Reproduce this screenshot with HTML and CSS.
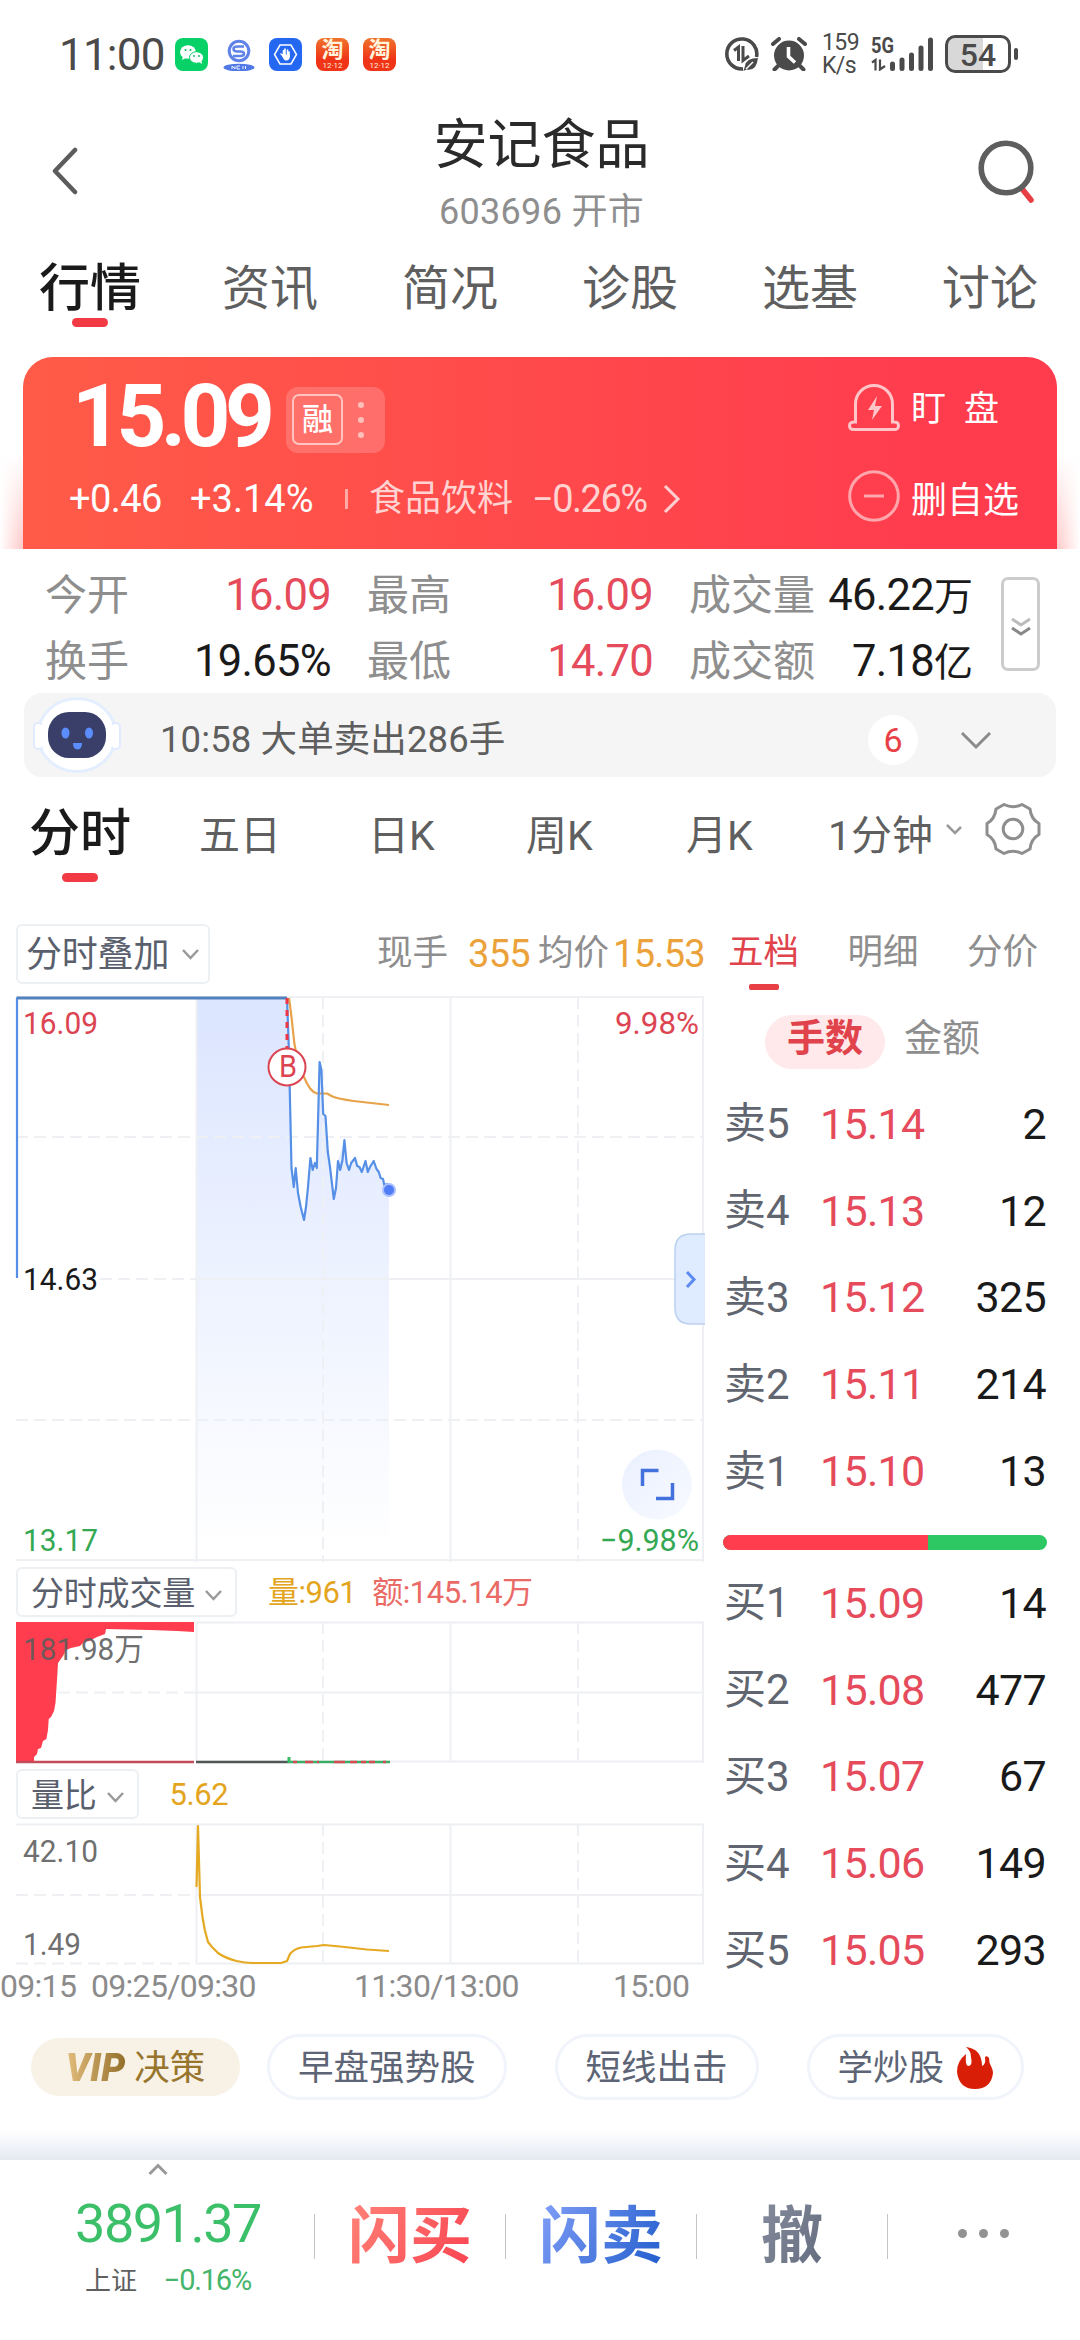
FILE: index.html
```html
<!DOCTYPE html>
<html lang="zh-CN">
<head>
    <meta charset="UTF-8">
    <meta name="viewport" content="width=device-width, initial-scale=1.0">
    <title>安记食品 603696</title>
    <link rel="stylesheet" href="styles.css">
</head>
<body>
    <div id="app">
        <div class="status-bar">
            <div class="status-left">
                <span class="clock">11:00</span>
                <svg class="app-icon" viewBox="0 0 33 33">
                    <rect width="33" height="33" rx="8" fill="#08d167"/>
                    <ellipse cx="13" cy="14" rx="8" ry="6.8" fill="#fff"/>
                    <path d="M8 18l-1 4 4-2z" fill="#fff"/>
                    <ellipse cx="21.5" cy="19.5" rx="7" ry="5.8" fill="#fff" stroke="#08d167"/>
                    <path d="M24 24l3 2-.6-3.500z" fill="#fff"/>
                    <g fill="#08b85c"><circle cx="10.500" cy="12" r="1"/><circle cx="15.500" cy="12" r="1"/><circle cx="19" cy="18" r=".9"/><circle cx="24" cy="18" r=".9"/></g>
                </svg>
                <svg class="app-icon" viewBox="0 0 33 33">
                    <circle cx="17" cy="13" r="9.800" fill="none" stroke="#5f83e8" stroke-width="3"/>
                    <path d="M22 8.500h-6.500q-4 0-4 2.500t4 2.500h3q3.500 0 3.500 2.300t-4 2.300h-7" fill="none" stroke="#5f83e8" stroke-width="2.500"/>
                    <ellipse cx="17" cy="29.500" rx="15.500" ry="3.800" fill="#5079e6"/>
                    <path d="M10 31v-3l3 3v-3M18 28h-3v3h3M21 28v3M23.500 28v3" fill="none" stroke="#fff" stroke-width=".9"/>
                </svg>
                <svg class="app-icon" viewBox="0 0 33 33">
                    <rect width="33" height="33" rx="8" fill="#2468f2"/>
                    <path d="M11 7h11l5.500 9.500L22 26H11L5.500 16.500z" fill="none" stroke="#fff" stroke-width="1.500"/>
                    <path d="M12 16l2.500 2v-5.500M16 17.500v-6.500M18.500 17.500v-5.500M20 18.500v-4.500" fill="none" stroke="#fff" stroke-width="1.600" stroke-linecap="round"/>
                    <path d="M12.500 16.500h8.300v2q0 4-3.800 4-2.500 0-4.500-6z" fill="#fff"/>
                </svg>
                <span class="app-icon taobao"><b>淘</b><i>12·12</i></span>
                <span class="app-icon taobao"><b>淘</b><i>12·12</i></span>
            </div>
            <div class="status-right">
                <svg class="ic-data" viewBox="0 0 34 34">
                    <path d="M31.500 20A15 15 0 1 0 18 31.900" fill="none" stroke="#4a4a4a" stroke-width="3.600"/>
                    <path d="M9 13.500l4.500-3.500v14M18 9v14.500l6-4.500" fill="none" stroke="#4a4a4a" stroke-width="3"/>
                    <path d="M33 21q-12 0-13 8l-1.500 5 3-1.500q10 2 11.500-11.500z" fill="#4a4a4a"/>
                    <path d="M21 32l7-7" stroke="#fff" stroke-width="1.500"/>
                </svg>
                <svg class="ic-alarm" viewBox="0 0 36 34">
                    <circle cx="18" cy="18.500" r="15" fill="#4a4a4a"/>
                    <path d="M2 7l6-5M34 7l-6-5M7 29l-3.500 3.500M29 29l3.500 3.500" stroke="#4a4a4a" stroke-width="4" stroke-linecap="round"/>
                    <path d="M17.500 10v9.500l6.500 6" fill="none" stroke="#fff" stroke-width="3.600"/>
                </svg>
                <div class="net-speed"><span>159</span><span>K/s</span></div>
                <svg class="ic-signal" viewBox="0 -3 63 37">
                    <text x="0" y="16" textLength="23" lengthAdjust="spacingAndGlyphs">5G</text>
                    <path d="M1 25.500l3.500-2.500v10.500M9 22.500v10l5-3.500" fill="none" stroke="#4a4a4a" stroke-width="2.200"/>
                    <path d="M21.500 27v4.500M31 23v8.500M40.500 18v13.500M50 11v20.500M59.500 3v28.500" stroke="#4a4a4a" stroke-width="5" stroke-linecap="round"/>
                </svg>
                <div class="battery"><span>54</span></div>
            </div>
        </div>

        <div class="header">
            <svg class="back" viewBox="0 0 26 48"><path d="M23 3L3 24l20 21" fill="none" stroke="#5c5c5c" stroke-width="4.500" stroke-linecap="round" stroke-linejoin="round"/></svg>
            <div class="header-title">
                <h1>安记食品</h1>
                <p>603696 开市</p>
            </div>
            <svg class="search" viewBox="0 0 58 64">
                <path d="M45 50l8 10" stroke="#e83f45" stroke-width="5.500" stroke-linecap="round"/>
                <circle cx="28" cy="28" r="24.800" fill="none" stroke="#5e5e5e" stroke-width="5.600"/>
            </svg>
        </div>

        <div class="main-tabs">
            <div class="main-tab active">行情</div>
            <div class="main-tab">资讯</div>
            <div class="main-tab">简况</div>
            <div class="main-tab">诊股</div>
            <div class="main-tab">选基</div>
            <div class="main-tab">讨论</div>
        </div>

        <div class="price-wrap">
            <div class="price-card">
                <div class="price-info">
                    <div class="price-row">
                        <span class="price">15.09</span>
                        <span class="tag-box"><span class="tag">融</span><span class="dots"><i></i><i></i><i></i></span></span>
                    </div>
                    <div class="change-row">
                        <span class="chg">+0.46</span>
                        <span class="pct">+3.14%</span>
                        <span class="bar-sep"></span>
                        <span class="sector">食品饮料</span>
                        <span class="sector-pct">−0.26%</span>
                        <svg width="18" height="30" viewBox="0 0 18 30"><path d="M2 2l13 13L2 28" fill="none" stroke="#ffd0d2" stroke-width="3"/></svg>
                    </div>
                </div>
                <div class="price-actions">
                    <div class="action watch">
                        <svg width="52" height="48" viewBox="0 0 52 48" fill="none" stroke="#ffc5c9" stroke-width="3">
                            <path d="M7.500 38V20a18.500 18.500 0 0 1 37 0v18h1.500q4.500 0 4.500 3.800t-4.500 3.700H6q-4.500 0-4.500-3.700T6 38z"/>
                            <path d="M29 12l-9 14h6l-2 10 10-14h-7z" fill="#ffc5c9" stroke="none"/>
                        </svg>
                        <span>盯</span><span>盘</span>
                    </div>
                    <div class="action remove">
                        <svg width="52" height="52" viewBox="0 0 52 52" fill="none" stroke="#ffa5ac" stroke-width="3"><circle cx="26" cy="26" r="24.300"/><path d="M16 26h20"/></svg>
                        <span>删自选</span>
                    </div>
                </div>
            </div>
        </div>

        <div class="stats">
            <div class="stats-grid">
                <div class="stat"><label>今开</label><span class="up">16.09</span></div>
                <div class="stat"><label>最高</label><span class="up">16.09</span></div>
                <div class="stat"><label>成交量</label><span>46.22<em>万</em></span></div>
                <div class="stat"><label>换手</label><span>19.65%</span></div>
                <div class="stat"><label>最低</label><span class="up">14.70</span></div>
                <div class="stat"><label>成交额</label><span>7.18<em>亿</em></span></div>
            </div>
            <div class="stats-more">
                <svg width="20" height="22" viewBox="0 0 20 22" fill="none" stroke-width="3"><path d="M1 3l9 6 9-6" stroke="#bbb"/><path d="M1 12l9 6 9-6" stroke="#888"/></svg>
            </div>
        </div>

        <div class="notice">
            <svg class="robot" width="90" height="76" viewBox="0 0 90 76">
                <ellipse cx="45" cy="38" rx="39" ry="36.500" fill="#fff" stroke="#e4eeff" stroke-width="3"/>
                <rect x="2" y="26" width="9" height="26" rx="4" fill="#fff" stroke="#e0ebff" stroke-width="2"/>
                <rect x="79" y="26" width="9" height="26" rx="4" fill="#fff" stroke="#e0ebff" stroke-width="2"/>
                <ellipse cx="45" cy="38" rx="37" ry="34" fill="#fff"/>
                <rect x="16" y="15" width="58" height="46" rx="21" fill="#393f68"/>
                <ellipse cx="33.500" cy="36" rx="4" ry="5.500" fill="#5c8dff"/>
                <ellipse cx="57" cy="36" rx="4" ry="5.500" fill="#5c8dff"/>
                <path d="M41 46h9q0 6-4.500 6.500Q41 52 41 46z" fill="#5c8dff"/>
            </svg>
            <span class="notice-text">10:58 大单卖出286手</span>
            <span class="notice-count">6</span>
            <svg width="32" height="20" viewBox="0 0 32 20"><path d="M2 2l14 14L30 2" fill="none" stroke="#8b8b8b" stroke-width="3"/></svg>
        </div>

        <div class="period-tabs">
            <span class="period active">分时</span>
            <span class="period">五日</span>
            <span class="period">日K</span>
            <span class="period">周K</span>
            <span class="period">月K</span>
            <span class="period minute">1分钟<svg width="16" height="12" viewBox="0 0 16 12"><path d="M1 1l8 8 6-6" fill="none" stroke="#999" stroke-width="2.500"/></svg></span>
            <svg class="gear" width="56" height="54" viewBox="0 0 56 54" fill="none" stroke="#8e8e8e" stroke-width="3">
                <path d="M19 2.500Q28 7 37 2.500L45 7Q46 17 54 21.500V32.500Q46 37 45 47L37 51.500Q28 47 19 51.500L11 47Q10 37 2 32.500V21.500Q10 17 11 7Z" stroke-linejoin="round"/>
                <circle cx="28" cy="27" r="9.800"/>
            </svg>
        </div>

        <div class="market">
            <div class="charts">
                <div class="chart-bar">
                    <div class="select overlay">分时叠加<svg width="17" height="12" viewBox="0 0 17 12"><path d="M1 1l7.500 8L16 1" fill="none" stroke="#999" stroke-width="2.500"/></svg></div>
                    <div class="now">
                        <span>现手</span><b class="lots">355</b><span>均价</span><b>15.53</b>
                    </div>
                </div>

                <svg class="chart" height="575" viewBox="0 990 710 575">
                    <defs>
                        <linearGradient id="fade" x1="0" y1="0" x2="0" y2="1">
                            <stop offset="0" stop-color="#dbe5ff"/>
                            <stop offset="1" stop-color="#dbe5ff" stop-opacity="0"/>
                        </linearGradient>
                        <linearGradient id="full" x1="0" y1="0" x2="1" y2="1">
                            <stop offset="0" stop-color="#eaf0ff"/>
                            <stop offset="1" stop-color="#f8faff"/>
                        </linearGradient>
                    </defs>
                    <path d="M197 998H287L291.500 1168 293.800 1187 295.700 1168 298 1193 304 1220 308 1187 310.400 1158 312.700 1170 316.800 1168 319.600 1062 323.200 1114 325.500 1116 327.800 1152 333.800 1199 338 1161 344.400 1140 349 1170 355 1158 361.800 1172 365.500 1161 367.800 1172 373.700 1161 380.600 1178 389 1190V1550H197z" fill="url(#fade)"/>
                    <g class="grid">
                        <path d="M16 997H704M196.500 997V1562M450.500 997V1562M703 997V1562M197 1279H704M16 1560H704"/>
                        <path class="dash" d="M323 997V1562M578 997V1562M16 1137H704M100 1279H197M16 1420H704"/>
                    </g>
                    <path d="M17 1278V998H287" class="line-price"/>
                    <path d="M17 998H287" stroke="#5282bd" stroke-width="3"/>
                    <path class="line-avg" d="M289 998L291.500 1017 294.300 1043 296 1052Q299 1068 304 1077 310 1092 317 1093.500H327L331.500 1096Q338 1099 353.500 1101L389 1105"/>
                    <path class="line-price" d="M287 998L288.800 1047 289.700 1087 291.500 1168 293.800 1187 295.700 1168 298 1193 300.700 1207 304 1220 306 1207 308 1187 310.400 1158 312.700 1170 315 1163 316.800 1168 319.600 1062 321.400 1070 323.200 1114 325.500 1116 327.800 1152 330 1167 333.800 1199 336 1188 338 1161 340.200 1170 342.500 1160 344.400 1140 346.600 1163 349 1170 351.200 1163 355 1158 357.200 1166 359.500 1167 361.800 1172 365.500 1161 367.800 1172 370 1167 373.700 1161 376.500 1169 378.800 1172 380.600 1178 383 1179 384.300 1185 387 1184 389 1190"/>
                    <circle cx="389" cy="1190" r="7" fill="#a9bfff"/>
                    <circle cx="389" cy="1190" r="5" fill="#4f7bf5"/>
                    <path d="M287 998V1048" stroke="#ee3744" stroke-width="3" stroke-dasharray="6 6"/>
                    <circle cx="287" cy="1067" r="18.500" fill="#fff" stroke="#dc4452" stroke-width="2"/>
                    <text class="up" x="279" y="1077" textLength="18" lengthAdjust="spacingAndGlyphs">B</text>
                    <text class="up" x="23" y="1034" textLength="75" lengthAdjust="spacingAndGlyphs">16.09</text>
                    <text class="up" x="615" y="1034" textLength="84" lengthAdjust="spacingAndGlyphs">9.98%</text>
                    <text x="23" y="1290" textLength="75" lengthAdjust="spacingAndGlyphs">14.63</text>
                    <text class="down" x="23" y="1551" textLength="75" lengthAdjust="spacingAndGlyphs">13.17</text>
                    <text class="down" x="600" y="1551" textLength="99" lengthAdjust="spacingAndGlyphs">−9.98%</text>
                    <path d="M705 1234H691Q675 1234 675 1250V1308Q675 1324 691 1324H705" fill="#dfebff" stroke="#bcd0f0" stroke-width="1.500"/>
                    <path d="M687 1272L694 1279.500 687 1287" fill="none" stroke="#5b8af0" stroke-width="3"/>
                    <circle cx="657" cy="1484.500" r="35" fill="url(#full)"/>
                    <path d="M658.500 1470.500H642.500V1486M656 1498.500H672.500V1483" fill="none" stroke="#4472dc" stroke-width="3.500"/>
                </svg>

                <div class="sub-bar">
                    <div class="select">分时成交量<svg width="17" height="12" viewBox="0 0 17 12"><path d="M1 1l7.500 8L16 1" fill="none" stroke="#999" stroke-width="2.500"/></svg></div>
                    <span class="gold">量:961</span>
                    <span class="rose">额:145.14万</span>
                </div>

                <svg class="chart" height="147" viewBox="0 1619 710 147">
                    <g class="grid">
                        <path d="M196 1622.500H704M196.500 1622V1762M450.500 1622V1762M703 1622V1763M197 1692.500H704M197 1761.500H704"/>
                        <path class="dash" d="M323 1622V1762M578 1622V1762M58 1692.500H197"/>
                    </g>
                    <path d="M16 1622H194V1632L177 1631 150 1630 106 1629 105 1634 97 1637 89 1641 84 1642 80 1646 71 1648 66 1650 63 1656 58 1663 57 1680 55.500 1703 54 1711 51 1717 48.700 1719 48 1730 46.400 1739 43 1741 41 1748 38 1749 37 1754 34 1757V1763H16z" fill="#ff3d4e"/>
                    <path d="M16 1762H194" stroke="#c34b5a" stroke-width="2.500"/>
                    <path d="M196 1762H290" stroke="#505755" stroke-width="2.500"/>
                    <path d="M289 1757V1763" stroke="#34bd65" stroke-width="3"/>
                    <path d="M290 1762H390" stroke="#3cab66" stroke-width="2.500"/>
                    <path d="M293 1762h4M305 1762h8M317 1762h2M334 1762h11M350 1762h7M361 1762h5M369 1762h6M383 1762h3" stroke="#d64c55" stroke-width="2.500"/>
                    <text class="gray" x="23" y="1660" textLength="121" lengthAdjust="spacingAndGlyphs">181.98万</text>
                </svg>

                <div class="sub-bar ratio-bar">
                    <div class="select">量比<svg width="17" height="12" viewBox="0 0 17 12"><path d="M1 1l7.500 8L16 1" fill="none" stroke="#999" stroke-width="2.500"/></svg></div>
                    <span class="gold">5.62</span>
                </div>

                <svg class="chart" height="145" viewBox="0 1821 710 145">
                    <g class="grid">
                        <path d="M16 1824.500H704M196.500 1824V1964M450.500 1824V1964M703 1824V1964M197 1895H704M197 1963.500H704"/>
                        <path class="dash" d="M323 1824V1964M578 1824V1964M16 1895H197M16 1963.500H197"/>
                    </g>
                    <path class="line-ratio" d="M196.500 1887L198 1826 200 1897 202.500 1917 204.800 1930 208 1942 212 1947 218 1953Q225 1958 236.500 1961 245 1963 252.500 1963H281L287 1961 290 1954Q294 1949 301 1947.500L317 1946 324 1945 340 1946.500 367 1949.500 389 1951"/>
                    <text class="gray" x="23" y="1862" textLength="75" lengthAdjust="spacingAndGlyphs">42.10</text>
                    <text class="gray" x="23" y="1955" textLength="58" lengthAdjust="spacingAndGlyphs">1.49</text>
                </svg>

                <div class="axis">
                    <span>09:15</span><span>09:25/09:30</span><span>11:30/13:00</span><span>15:00</span>
                </div>
            </div>

            <div class="book">
                <div class="book-tabs">
                    <span class="active">五档</span><span>明细</span><span>分价</span>
                </div>
                <div class="book-unit"><span class="active">手数</span><span>金额</span></div>
                <div class="level"><label>卖5</label><b>15.14</b><span>2</span></div>
                <div class="level"><label>卖4</label><b>15.13</b><span>12</span></div>
                <div class="level"><label>卖3</label><b>15.12</b><span>325</span></div>
                <div class="level"><label>卖2</label><b>15.11</b><span>214</span></div>
                <div class="level"><label>卖1</label><b>15.10</b><span>13</span></div>
                <div class="power"><i style="width: 63.2%"></i></div>
                <div class="level"><label>买1</label><b>15.09</b><span>14</span></div>
                <div class="level"><label>买2</label><b>15.08</b><span>477</span></div>
                <div class="level"><label>买3</label><b>15.07</b><span>67</span></div>
                <div class="level"><label>买4</label><b>15.06</b><span>149</span></div>
                <div class="level"><label>买5</label><b>15.05</b><span>293</span></div>
            </div>
        </div>

        <div class="chips">
            <div class="chip vip"><b>VIP</b><span>决策</span></div>
            <div class="chip"><span>早盘强势股</span></div>
            <div class="chip"><span>短线出击</span></div>
            <div class="chip"><span>学炒股</span><svg width="36" height="42" viewBox="0 0 36 42"><path d="M9 0Q25 2 25 19q4-1 3-9 2-2 4 1 0 5 2 8 2 4 2 7-2 16-18 16T0 25Q0 14 9 7q-1 11 2 12 5 0 3-9Q14 4 9 0z" fill="#d81e06"/></svg></div>
        </div>

        <div class="bottom-shade"></div>
        <div class="bottom-bar">
            <div class="index">
                <svg width="20" height="13" viewBox="0 0 20 13"><path d="M1.500 11L10 2.500l8.500 8.500" fill="none" stroke="#999" stroke-width="3"/></svg>
                <div class="index-value">3891.37</div>
                <div class="index-sub"><span>上证</span><em>−0.16%</em></div>
            </div>
            <div class="trade"><b class="buy">闪买</b></div>
            <div class="trade"><b class="sell">闪卖</b></div>
            <div class="trade"><b class="cancel">撤</b></div>
            <div class="trade more"><i></i><i></i><i></i></div>
        </div>
    </div>
</body>
</html>
```
FILE: styles.css
```css
* {
    margin: 0;
    padding: 0;
    box-sizing: border-box;
}

body {
    width: 1080px;
    height: 2340px;
    font-family: Roboto, "Noto Sans CJK SC", sans-serif;
    line-height: 1;
    background: #fff;
    color: #1a1a1a;
    overflow: hidden;
}

svg {
    display: block;
    flex: none;
}

b, i, em {
    font-style: normal;
    font-weight: 400;
}

span, b, label {
    white-space: nowrap;
}

#app {
    display: flex;
    flex-direction: column;
}

/* status bar */
.status-bar {
    height: 108px;
    padding: 0 62px 0 59px;
    display: flex;
    justify-content: space-between;
    align-items: center;
    color: #4a4a4a;
}

.status-left,
.status-right {
    display: flex;
    align-items: center;
}

.status-left {
    gap: 14px;
}

.clock {
    width: 102px;
    padding-top: 2px;
    font-size: 44px;
    letter-spacing: -0.8px;
}

.app-icon {
    width: 33px;
    height: 33px;
}

.taobao {
    border-radius: 8px;
    background: linear-gradient(#f0732c, #ef3417 65%);
    color: #fff3dc;
    display: flex;
    flex-direction: column;
    align-items: center;
}

.taobao b {
    font-size: 22px;
    font-weight: 700;
    line-height: 24px;
}

.taobao i {
    font-size: 8px;
    line-height: 8px;
}

.ic-data {
    width: 34px;
    height: 34px;
    margin-right: 12px;
}

.ic-alarm {
    width: 36px;
    height: 34px;
    margin-right: 15px;
}

.net-speed {
    width: 37px;
    margin-right: 12px;
    display: flex;
    flex-direction: column;
    font-size: 23px;
    line-height: 23px;
    letter-spacing: -0.6px;
}

.ic-signal {
    width: 63px;
    height: 37px;
    margin: 0 11px 3px 0;
}

.ic-signal text {
    font-size: 22px;
    font-weight: 700;
    fill: #4a4a4a;
}

.battery {
    position: relative;
    width: 66px;
    height: 38px;
    margin-right: 7px;
    border: 3px solid #4a4a4a;
    border-radius: 10px;
    background: linear-gradient(90deg, #d8d8d8 58%, #fff 58%);
    font-size: 32px;
    font-weight: 500;
    line-height: 34px;
    text-align: center;
}

.battery::after {
    content: "";
    position: absolute;
    right: -10px;
    top: 10px;
    width: 4px;
    height: 12px;
    border-radius: 2px;
    background: #4a4a4a;
}

/* header */
.header {
    height: 132px;
    padding: 0 44px 0 52px;
    display: flex;
    justify-content: space-between;
}

.back {
    width: 26px;
    height: 48px;
    margin-top: 39px;
}

.header-title {
    margin-left: 27px;
    padding-top: 11px;
    text-align: center;
}

.header h1 {
    font-size: 54px;
    font-weight: 400;
    color: #2a2a2a;
}

.header p {
    margin-top: 21px;
    font-size: 36px;
    letter-spacing: 0.3px;
    color: #8e8e8e;
}

.search {
    width: 58px;
    height: 64px;
    margin-top: 32px;
}

.main-tabs {
    height: 117px;
    display: flex;
}

.main-tab {
    flex: 1;
    height: 90px;
    display: flex;
    justify-content: center;
    font-size: 48px;
    line-height: 97px;
    color: #5f5f5f;
}

.main-tab.active {
    position: relative;
    font-size: 51px;
    font-weight: 500;
    color: #1a1a1a;
}

.main-tab.active::after {
    content: "";
    position: absolute;
    top: 78px;
    width: 36px;
    height: 9px;
    border-radius: 5px;
    background: #f13a43;
}

/* price card */
.price-wrap {
    height: 192px;
    padding: 0 23px;
    background:
        linear-gradient(#fff 50%, rgba(255, 255, 255, 0)),
        linear-gradient(90deg, #fff, #ffc9c9 23px, #ffc9c9 1057px, #fff);
}

.price-card {
    height: 192px;
    border-radius: 30px 30px 0 0;
    background: linear-gradient(90deg, #ff5b48, #ff3c4e 88%);
    color: #fff;
    display: flex;
    justify-content: space-between;
}

.price-info {
    padding-left: 46px;
}

.price-row {
    height: 117px;
    padding: 0 0 5px 3px;
    display: flex;
    align-items: center;
}

.price {
    width: 210px;
    padding-top: 6px;
    margin-right: 4px;
    font-size: 87px;
    font-weight: 700;
    letter-spacing: -5.500px;
}

.tag-box {
    width: 99px;
    height: 66px;
    padding: 0 6px;
    margin-top: 13px;
    border-radius: 12px;
    background: rgba(255, 255, 255, 0.18);
    display: flex;
    align-items: center;
}

.tag {
    width: 51px;
    height: 51px;
    border: 2px solid #ffc4c0;
    border-radius: 7px;
    font-size: 31px;
    font-weight: 500;
    line-height: 47px;
    text-align: center;
}

.dots {
    flex: 1;
    display: flex;
    flex-direction: column;
    align-items: center;
    gap: 9px;
}

.dots i {
    width: 6px;
    height: 6px;
    border-radius: 50%;
    background: #ffc0ba;
}

.change-row {
    height: 50px;
    display: flex;
    align-items: center;
    font-size: 38px;
}

.chg {
    width: 121px;
    letter-spacing: -0.6px;
}

.pct {
    width: 155px;
}

.bar-sep {
    width: 3px;
    height: 20px;
    margin-right: 21px;
    background: #ffaaa5;
}

.sector {
    width: 163px;
    font-size: 36px;
    color: #ffd3d1;
}

.sector-pct {
    width: 131px;
    letter-spacing: -1.5px;
    color: #ffd3d1;
}

.price-actions {
    width: 209px;
    padding-top: 24px;
}

.action {
    height: 54px;
    display: flex;
    align-items: center;
    font-size: 36px;
}

.action svg {
    margin-right: 11px;
}

.watch {
    margin-bottom: 34px;
}

.watch span {
    width: 53px;
    padding-top: 2px;
    font-size: 35px;
}

.remove span {
    padding-top: 9px;
}

/* stats */
.stats {
    height: 144px;
    padding-left: 45px;
    display: flex;
}

.stats-grid {
    width: 928px;
    padding-top: 14px;
    display: grid;
    grid-template-columns: 286px 322px 320px;
    grid-template-rows: 66px 66px;
}

.stat {
    display: flex;
    justify-content: space-between;
    align-items: center;
    font-size: 43.500px;
    letter-spacing: -0.7px;
}

.stat + .stat {
    padding-left: 36px;
}

.stat:nth-child(4) {
    padding-left: 0;
}

.stat label {
    font-size: 42px;
    letter-spacing: 0;
    color: #8e8e8e;
}

.stat em {
    font-size: 39px;
    letter-spacing: 0;
}

.up {
    color: #e54b5b;
}

.stats-more {
    width: 39px;
    height: 94px;
    margin: 28px 0 0 28px;
    border: 3px solid #ccc;
    border-radius: 7px;
    display: flex;
    justify-content: center;
    padding-top: 36px;
}

.notice {
    height: 84px;
    margin: 0 24px;
    padding: 0 64px 0 8px;
    border-radius: 18px;
    background: #f5f5f5;
    color: #5e5e5e;
    display: flex;
    align-items: center;
}

.notice-text {
    flex: 1;
    margin-left: 38px;
    padding-top: 11px;
    font-size: 36.500px;
    letter-spacing: 0.1px;
}

.notice-count {
    width: 50px;
    height: 50px;
    margin: 10px 42px 0 0;
    border-radius: 50%;
    background: #fff;
    color: #e83f45;
    font-size: 34px;
    line-height: 50px;
    text-align: center;
}

.notice > svg:last-child {
    margin-top: 12px;
}

/* period tabs */
.period-tabs {
    height: 133px;
    padding: 0 30px 0 29px;
    display: flex;
    align-items: flex-start;
    color: #5f5f5f;
}

.period {
    flex: none;
    width: 158px;
    padding-top: 39px;
    font-size: 41px;
}

.period.active {
    position: relative;
    width: 170px;
    padding-top: 31px;
    font-size: 51px;
    font-weight: 500;
    color: #1a1a1a;
}

.period.active::after {
    content: "";
    position: absolute;
    left: 33px;
    top: 96px;
    width: 36px;
    height: 9px;
    border-radius: 5px;
    background: #f13a43;
}

.period:nth-child(2) {
    width: 169px;
}

.period:nth-child(4) {
    width: 160px;
}

.period:nth-child(5) {
    width: 142px;
}

.period.minute {
    width: 157px;
    display: flex;
    gap: 13px;
    font-size: 41px;
}

.minute svg {
    margin-top: 8px;
}

.gear {
    margin-top: 25px;
}

/* charts and order book */
.market {
    height: 1105px;
    display: flex;
}

.charts {
    width: 710px;
}

.chart-bar {
    height: 80px;
    padding: 14px 5px 0 16px;
    display: flex;
    justify-content: space-between;
}

.select {
    height: 50px;
    padding: 2px 13px 0 13px;
    border: 2px solid #edf0f3;
    border-radius: 6px;
    display: flex;
    align-items: center;
    gap: 10px;
    font-size: 33px;
    letter-spacing: -0.2px;
    color: #5a5f6d;
}

.select svg {
    margin-top: 5px;
}

.select.overlay {
    height: 60px;
    padding: 2px 9px 0 8px;
    gap: 13px;
    font-size: 36px;
}

.overlay svg {
    margin-top: 0;
}

.now {
    display: flex;
    align-items: center;
    height: 60px;
    font-size: 35.500px;
    color: #8e8e8e;
}

.now b {
    margin-left: 4px;
    font-size: 38px;
    letter-spacing: -0.7px;
    color: #eba23a;
}

.now .lots {
    margin: 0 8px 0 20px;
}

.chart {
    width: 710px;
}

.chart text {
    font-size: 31px;
    fill: #1a1a1a;
}

.chart text.up {
    fill: #dc4452;
}

.chart text.down {
    fill: #34a853;
}

.chart text.gray {
    fill: #5c5c5c;
    fill-opacity: 0.9;
}

.grid path {
    fill: none;
    stroke: #eef0f4;
    stroke-width: 2;
}

.grid .dash {
    stroke-dasharray: 12 6;
}

.line-price,
.line-avg,
.line-ratio {
    fill: none;
    stroke: #5590e6;
    stroke-width: 2.200;
    stroke-linejoin: round;
}

.line-avg {
    stroke: #e7a24a;
}

.line-ratio {
    stroke: #e5a922;
}

.sub-bar {
    height: 54px;
    padding: 2px 0 0 16px;
    display: flex;
    align-items: flex-start;
}

.sub-bar.ratio-bar {
    height: 55px;
    padding-top: 3px;
}

.sub-bar > span {
    margin-top: 10px;
    font-size: 31px;
    letter-spacing: -0.5px;
}

.sub-bar > .gold {
    margin: 10px 16px 0 31px;
    color: #e3a51d;
}

.rose {
    color: #ea6a66;
}

.axis {
    display: flex;
    padding-top: 4px;
    font-size: 32px;
    letter-spacing: -0.7px;
    color: #8b8b8b;
}

.axis span:nth-child(1) {
    width: 91px;
}

.axis span:nth-child(2) {
    width: 263px;
}

.axis span:nth-child(3) {
    width: 259px;
}

.book {
    width: 337px;
    padding: 0 0 0 13px;
}

.book-tabs {
    width: 330px;
    height: 80px;
    margin-left: 5px;
    padding-top: 25px;
    display: flex;
    font-size: 35.500px;
    color: #8e8e8e;
}

.book-tabs span {
    flex: none;
    width: 119.500px;
}

.book-tabs .active {
    position: relative;
    color: #e0434b;
}

.book-tabs .active::after {
    content: "";
    position: absolute;
    left: 21px;
    top: 49px;
    width: 30px;
    height: 6px;
    border-radius: 2px;
    background: #e83f45;
}

.book-unit {
    height: 91px;
    padding: 25px 0 0 42px;
    display: flex;
    gap: 19px;
    font-size: 38px;
    line-height: 46px;
    color: #8e8e8e;
}

.book-unit .active {
    width: 120px;
    height: 54px;
    border-radius: 27px;
    background: #ffe9ea;
    color: #e0434b;
    font-weight: 700;
    text-align: center;
}

.level {
    height: 86.800px;
    display: flex;
    align-items: center;
    font-size: 43px;
    letter-spacing: -0.7px;
}

.level label {
    width: 97px;
    padding-left: 1px;
    color: #60656f;
    font-size: 42px;
    letter-spacing: 0;
}

.level b {
    color: #e54b5b;
}

.level span {
    flex: 1;
    padding-right: 1px;
    text-align: right;
}

.power {
    height: 15px;
    margin: 20px 0 10px;
    border-radius: 8px;
    background: #2dc864;
    overflow: hidden;
}

.power i {
    display: block;
    height: 15px;
    background: #ff3d4e;
}

/* chips */
.chips {
    height: 115px;
    padding: 19px 0 0 31px;
    display: flex;
    align-items: flex-start;
}

.chip {
    height: 66px;
    padding: 0 28px;
    margin-right: 48px;
    border: 3px solid #f1f4fa;
    border-radius: 33px;
    display: flex;
    align-items: center;
    font-size: 35.500px;
    color: #5c6475;
}

.chip span {
    padding-top: 3px;
}

.chip svg {
    margin-left: 13px;
    margin-top: 2px;
}

.chip.vip {
    width: 209px;
    height: 58px;
    margin: 4px 27px 0 0;
    padding: 0;
    border: none;
    justify-content: center;
    background: #f7f1e6;
    color: #97752d;
}

.vip b {
    margin-right: 6px;
    padding: 2px 3px 0 0;
    font-size: 38px;
    font-weight: 900;
    font-style: italic;
    background: linear-gradient(90deg, #e3bd7d, #8f6c26);
    -webkit-background-clip: text;
    color: transparent;
}

.bottom-shade {
    height: 30px;
    background: linear-gradient(#fff, #e4e9f2);
}

/* bottom bar */
.bottom-bar {
    height: 180px;
    display: flex;
}

.index {
    width: 314px;
    display: flex;
    flex-direction: column;
    align-items: center;
    padding: 3px 0 0 22px;
}

.index svg {
    margin-right: 21px;
}

.index-value {
    margin-top: 21px;
    font-size: 54px;
    letter-spacing: -1.500px;
    color: #3cbf69;
}

.index-sub {
    margin-top: 15px;
    width: 166px;
    display: flex;
    justify-content: space-between;
    align-items: center;
    font-size: 26px;
    color: #5f5f5f;
}

.index-sub em {
    font-size: 29px;
    letter-spacing: -1.2px;
    color: #45b56c;
}

.trade {
    width: 191px;
    height: 45px;
    margin-top: 54px;
    border-left: 1px solid #c4c4c4;
    display: flex;
    justify-content: center;
    align-items: center;
    gap: 12px;
}

.trade b {
    font-size: 62px;
    line-height: 80px;
    font-weight: 700;
    background: linear-gradient(120deg, #ff8478, #f9414f);
    -webkit-background-clip: text;
    color: transparent;
}

.trade .sell {
    background-image: linear-gradient(120deg, #84a0f8, #1e5bcb);
}

.trade .cancel {
    background-image: linear-gradient(120deg, #868c9d, #626b7e);
}

.trade.more i {
    width: 9px;
    height: 9px;
    margin-bottom: 7px;
    border-radius: 50%;
    background: #929292;
}
```
